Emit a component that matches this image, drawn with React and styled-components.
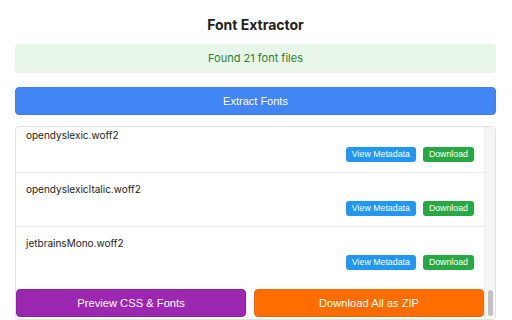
import React from "react";
import styled, { createGlobalStyle } from "styled-components";

const TOTAL_FILES = 21;

// the list is shown scrolled to its end: only the last rows are in view
const visibleFiles = [
  "opendyslexic.woff2",
  "opendyslexicItalic.woff2",
  "jetbrainsMono.woff2",
];

function App() {
  return (
    <>
      <GlobalStyle />
      <Page>
        <Title>Font Extractor</Title>
        <Status>Found {TOTAL_FILES} font files</Status>
        <ExtractButton>Extract Fonts</ExtractButton>
        <FileList>
          <Viewport>
            {visibleFiles.map((name, i) => (
              <FileRow key={name} $last={i === visibleFiles.length - 1}>
                <FileName>{name}</FileName>
                <Actions>
                  <SmallButton $color="#2196f3">View Metadata</SmallButton>
                  <SmallButton $color="#28a745">Download</SmallButton>
                </Actions>
              </FileRow>
            ))}
            <Footer>
              <BigButton $color="#9c27b0" $border="#8e1fa5">
                Preview CSS &amp; Fonts
              </BigButton>
              <BigButton $color="#ff6d00" $border="#f56800">
                Download All as ZIP
              </BigButton>
            </Footer>
          </Viewport>
          <ScrollTrack>
            <ScrollThumb />
          </ScrollTrack>
        </FileList>
      </Page>
    </>
  );
}

const GlobalStyle = createGlobalStyle`
  html, body {
    margin: 0;
    background: #ffffff;
    overflow: hidden;
  }
  body {
    font-family: Inter, "Noto Sans", sans-serif;
    color: #222222;
  }
`;

const Page = styled.div`
  display: flex;
  flex-direction: column;
  padding: 16px 16px 0 15px;
`;

const Title = styled.h1`
  margin: 0;
  font-size: 14px;
  line-height: 17px;
  font-weight: 700;
  text-align: center;
  color: #222222;
`;

const Status = styled.div`
  margin-top: 11px;
  height: 29px;
  line-height: 29px;
  border-radius: 4px;
  background: #e8f5e9;
  color: #2e7d32;
  font-size: 11px;
  text-align: center;
`;

const ExtractButton = styled.button`
  margin-top: 14px;
  height: 28px;
  border: 1px solid #3b7ff0;
  border-radius: 4px;
  background: #4285f4;
  color: #ffffff;
  font-family: "Liberation Sans", Arial, sans-serif;
  font-size: 11px;
  cursor: pointer;
`;

const FileList = styled.div`
  margin-top: 11px;
  height: 194px;
  box-sizing: border-box;
  display: flex;
  border: 1px solid #e2e2e2;
  border-radius: 4px;
  overflow: hidden;
`;

const Viewport = styled.div`
  flex: 1;
  min-width: 0;
  display: flex;
  flex-direction: column;
  justify-content: flex-end;
  overflow: hidden;
`;

const ScrollTrack = styled.div`
  width: 11px;
  display: flex;
  flex-direction: column;
  justify-content: flex-end;
  padding: 0 2px 3px 3px;
  box-sizing: border-box;
  background: #f6f6f6;
  border-left: 1px solid #ececec;
`;

const ScrollThumb = styled.div`
  height: 26px;
  border-radius: 4px;
  background: #c2c2c2;
`;

const FileRow = styled.div`
  display: flex;
  flex-direction: column;
  gap: 5px;
  padding: 9px 10px 10px 10px;
  border-bottom: ${(p) => (p.$last ? "none" : "1px solid #ececec")};
`;

const FileName = styled.div`
  font-size: 10px;
  line-height: 14px;
  color: #222222;
`;

const Actions = styled.div`
  display: flex;
  justify-content: flex-end;
  gap: 7px;
`;

const SmallButton = styled.button`
  height: 15px;
  padding: 0 6px;
  border: none;
  border-radius: 3px;
  background: ${(p) => p.$color};
  color: #ffffff;
  font-family: "Liberation Sans", Arial, sans-serif;
  font-size: 8.8px;
  line-height: 15px;
  cursor: pointer;
`;

const Footer = styled.div`
  display: grid;
  grid-template-columns: 1fr 1fr;
  gap: 8px;
  padding: 9px 0 2px 0;
  background: #ffffff;
`;

const BigButton = styled.button`
  height: 28px;
  border: 1px solid ${(p) => p.$border};
  border-radius: 4px;
  background: ${(p) => p.$color};
  color: #ffffff;
  font-family: "Liberation Sans", Arial, sans-serif;
  font-size: 11.2px;
  cursor: pointer;
`;

export default App;
